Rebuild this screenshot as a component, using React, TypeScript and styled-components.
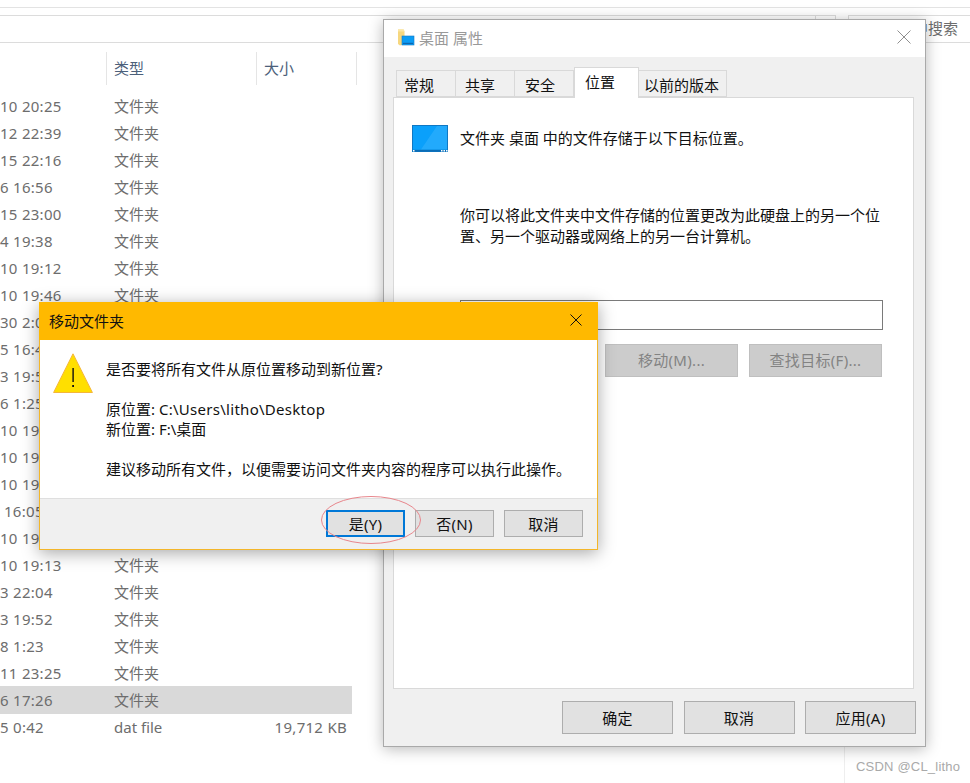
import styled, { createGlobalStyle } from 'styled-components';

const GlobalStyle = createGlobalStyle`
    html, body {
        margin: 0;
        padding: 0;
        background: #fff;
    }
    * {
        box-sizing: border-box;
    }
`;

const FONT = `'Noto Sans', 'Noto Sans CJK SC', sans-serif`;

const Page = styled.div`
    position: relative;
    width: 970px;
    height: 783px;
    overflow: hidden;
    background: #fff;
    font-family: ${FONT};
    font-size: 15px;
`;

// latin runs in the reference are a bit wider than Noto Sans
const Latin = styled.span`
    letter-spacing: 0.28px;
`;

/* ---------- explorer behind the dialogs ---------- */

const TopLine = styled.div`
    height: 8px;
    border-bottom: 1px solid #e3e3e3;
    margin-bottom: 7px;
`;

const AddressRow = styled.div`
    display: flex;
    height: 28px;
    border-bottom: 1px solid #dcdcdc;
`;

const AddressBox = styled.div`
    width: 815px;
    border-top: 1px solid #dcdcdc;
`;

const RefreshBox = styled.div`
    width: 21px;
    border: 1px solid #dcdcdc;
    border-bottom: 0;
`;

const SearchBox = styled.div`
    margin-left: 12px;
    flex: 1;
    border: 1px solid #dcdcdc;
    border-bottom: 0;
    border-right: 0;
    padding-right: 12px;
    text-align: right;
    line-height: 24px;
    color: #6d6d6d;
    white-space: nowrap;
`;

const ExplorerBody = styled.div`
    position: relative;
    height: 740px;
`;

const SideLine = styled.div`
    position: absolute;
    left: 844px;
    top: 0;
    bottom: 0;
    width: 1px;
    background: #eeeeee;
`;

const HeaderRow = styled.div`
    display: grid;
    grid-template-columns: 107px 150px 100px;
    width: 357px;
    height: 32px;
    margin: 9px 0;
`;

const HeaderCell = styled.div`
    border-right: 1px solid #e5e5e5;
    padding-left: 7px;
    line-height: 33px;
    color: #4c607a;
`;

const FileRow = styled.div<{ $selected?: boolean }>`
    display: grid;
    grid-template-columns: 114px 1fr auto;
    width: 352px;
    height: 27px;
    padding-right: 5px;
    line-height: 27px;
    color: #6d6d6d;
    white-space: nowrap;
    background: ${(p) => (p.$selected ? '#d9d9d9' : 'transparent')};
    box-shadow: ${(p) => (p.$selected ? '0 -1px 0 #d9d9d9' : 'none')};
`;

const DateCell = styled(Latin)<{ $indent?: boolean }>`
    padding-left: ${(p) => (p.$indent ? '4px' : '0')};
`;

/* ---------- shared window parts ---------- */

const WinButton = styled.div<{ $wide?: boolean; $focus?: boolean }>`
    display: flex;
    align-items: center;
    justify-content: center;
    width: ${(p) => (p.$wide ? '111px' : '79px')};
    height: ${(p) => (p.$wide ? '33px' : '27px')};
    background: #e1e1e1;
    border: ${(p) => (p.$focus ? '2px solid #0078d7' : '1px solid #adadad')};
    color: #111;
    letter-spacing: 0.3px;
`;

/* ---------- properties window ---------- */

const PropsWindow = styled.div`
    position: absolute;
    left: 383px;
    top: 19px;
    width: 543px;
    height: 728px;
    display: flex;
    flex-direction: column;
    background: #f0f0f0;
    border: 1px solid #a9a9a9;
    box-shadow: 0 2px 14px rgba(0, 0, 0, 0.28);
`;

const PropsTitle = styled.div`
    display: flex;
    align-items: center;
    height: 37px;
    padding: 0 14px 3px 13px;
    background: #fff;
    color: #999;
`;

const TitleText = styled.span`
    margin-left: 4px;
    flex: 1;
`;

const TabStrip = styled.div`
    display: flex;
    align-items: flex-end;
    height: 40px;
    padding-left: 12px;
    position: relative;
`;

const Tab = styled.div<{ $active?: boolean; $width: number; $pad: number }>`
    width: ${(p) => p.$width}px;
    height: ${(p) => (p.$active ? '31px' : '27px')};
    margin-bottom: ${(p) => (p.$active ? '-1px' : '0')};
    padding-left: ${(p) => p.$pad}px;
    border: 1px solid #d9d9d9;
    border-bottom: ${(p) => (p.$active ? '0' : '1px solid #d9d9d9')};
    border-left: ${(p) => (p.$active ? '1px solid #d9d9d9' : '0')};
    background: ${(p) => (p.$active ? '#fff' : '#f0f0f0')};
    line-height: 28px;
    color: #111;
    position: relative;
    z-index: ${(p) => (p.$active ? 1 : 0)};
    white-space: nowrap;
    &:first-child {
        border-left: 1px solid #d9d9d9;
    }
`;

const TabPanel = styled.div`
    width: 521px;
    height: 592px;
    margin-left: 9px;
    background: #fff;
    border: 1px solid #d9d9d9;
    display: flex;
    flex-direction: column;
    padding: 27px 0 0 18px;
    color: #111;
`;

const InfoRow = styled.div`
    display: flex;
    align-items: center;
    gap: 12px;
    height: 27px;
`;

const InfoText = styled.span`
    margin-top: -2px;
`;

const Paragraph = styled.div`
    width: 425px;
    margin: 53px 0 0 48px;
    line-height: 21px;
`;

const PathInput = styled.div`
    width: 423px;
    height: 30px;
    margin: 53px 0 0 48px;
    border: 1px solid #7a7a7a;
    background: #fff;
`;

const ActionRow = styled.div`
    display: flex;
    gap: 11px;
    margin: 14px 0 0 49px;
`;

const DisabledButton = styled.div`
    display: flex;
    align-items: center;
    justify-content: center;
    width: 133px;
    height: 33px;
    padding-bottom: 2px;
    background: #cccccc;
    border: 1px solid #bfbfbf;
    color: #838383;
    letter-spacing: 0.3px;
`;

const PropsFooter = styled.div`
    display: flex;
    justify-content: flex-end;
    gap: 10.5px;
    padding: 12px 9px 0 0;
`;

/* ---------- move dialog ---------- */

const MoveDialog = styled.div`
    position: absolute;
    left: 39px;
    top: 302px;
    width: 559px;
    height: 248px;
    display: flex;
    flex-direction: column;
    background: #f0f0f0;
    border: 1px solid #f3b62a;
    border-top: 0;
    box-shadow: 0 3px 16px rgba(0, 0, 0, 0.35);
`;

const MoveTitle = styled.div`
    display: flex;
    align-items: center;
    justify-content: space-between;
    height: 38px;
    margin: 0 -1px;
    padding: 0 16px 2px 10px;
    background: #ffb900;
    color: #111;
`;

const MoveBody = styled.div`
    display: flex;
    gap: 13px;
    height: 159px;
    padding: 13px 0 0 13px;
    background: #fff;
    border-bottom: 1px solid #dfdfdf;
    color: #111;
`;

const MoveText = styled.div`
    margin-top: 6px;
    line-height: 20px;
`;

const MoveLine = styled.div<{ $gap?: boolean }>`
    margin-top: ${(p) => (p.$gap ? '20px' : '0')};
`;

const MoveFooter = styled.div`
    display: flex;
    justify-content: flex-end;
    gap: 10px;
    padding: 11px 14px 0 0;
`;

const Ellipse = styled.svg`
    position: absolute;
    left: 281px;
    top: 194px;
    overflow: visible;
`;

const Watermark = styled.div`
    position: absolute;
    left: 856px;
    top: 759px;
    font-family: 'Liberation Sans', sans-serif;
    font-size: 13px;
    letter-spacing: 0.2px;
    color: #a9a9a9;
`;

const FolderIcon = () => (
    <svg width="18" height="18" viewBox="0 0 18 18">
        <path d="M1 1.5h5.5l1 1.5V16L3 17.5 1 16z" fill="#f6d77f" />
        <path d="M1 1.5h6v2H1z" fill="#fbe6a4" />
        <rect x="5" y="8" width="12" height="9" fill="#0a9cf5" stroke="#1578c4" strokeWidth="0.6" />
        <rect x="6" y="14.8" width="10" height="1.2" fill="#0c67b0" />
    </svg>
);

const DesktopIcon = () => (
    <svg width="36" height="27" viewBox="0 0 36 27">
        <rect x="0.5" y="0.5" width="35" height="26" fill="#0aa0fb" stroke="#0f78c4" />
        <path d="M9 24.5 25 1h10v23.5z" fill="#5cc3ff" opacity="0.3" />
        <rect x="1" y="24.8" width="34" height="1.7" fill="#0b6cb5" />
        <rect x="1" y="25" width="1.5" height="1.5" fill="#fff" />
        <rect x="29" y="25" width="1.5" height="1.5" fill="#fff" />
        <rect x="31.5" y="25" width="1.5" height="1.5" fill="#fff" />
        <rect x="34" y="25" width="1.5" height="1.5" fill="#fff" />
    </svg>
);

const CloseIcon = ({ color, size }: { color: string; size: number }) => (
    <svg width={size} height={size} viewBox={`0 0 ${size} ${size}`}>
        <path d={`M0.5 0.5 ${size - 0.5} ${size - 0.5}M${size - 0.5} 0.5 0.5 ${size - 0.5}`} stroke={color} fill="none" />
    </svg>
);

const WarningIcon = () => (
    <svg width="40" height="40" viewBox="0 0 40 40" style={{ flexShrink: 0 }}>
        <path d="M20 0.8 39.4 39.5H0.6z" fill="#ffdf00" stroke="#f4b63a" strokeLinejoin="round" />
        <rect x="19.4" y="15" width="1.4" height="14" fill="#111" />
        <rect x="19.2" y="32" width="1.8" height="2" fill="#111" />
    </svg>
);

const FILES: { date: string; type: string; size?: string; indent?: boolean; selected?: boolean }[] = [
    { date: '10 20:25', type: '文件夹' },
    { date: '12 22:39', type: '文件夹' },
    { date: '15 22:16', type: '文件夹' },
    { date: '6 16:56', type: '文件夹' },
    { date: '15 23:00', type: '文件夹' },
    { date: '4 19:38', type: '文件夹' },
    { date: '10 19:12', type: '文件夹' },
    { date: '10 19:46', type: '文件夹' },
    { date: '30 2:05', type: '文件夹' },
    { date: '5 16:42', type: '文件夹' },
    { date: '3 19:52', type: '文件夹' },
    { date: '6 1:25', type: '文件夹' },
    { date: '10 19:12', type: '文件夹' },
    { date: '10 19:12', type: '文件夹' },
    { date: '10 19:12', type: '文件夹' },
    { date: '16:05', type: '文件夹', indent: true },
    { date: '10 19:12', type: '文件夹' },
    { date: '10 19:13', type: '文件夹' },
    { date: '3 22:04', type: '文件夹' },
    { date: '3 19:52', type: '文件夹' },
    { date: '8 1:23', type: '文件夹' },
    { date: '11 23:25', type: '文件夹' },
    { date: '6 17:26', type: '文件夹', selected: true },
    { date: '5 0:42', type: 'dat file', size: '19,712 KB' },
];

const TABS = [
    { label: '常规', width: 60, pad: 7 },
    { label: '共享', width: 59, pad: 9 },
    { label: '安全', width: 59, pad: 10 },
    { label: '位置', width: 65, pad: 10 },
    { label: '以前的版本', width: 88, pad: 5 },
];

export default function App() {
    return (
        <Page>
            <GlobalStyle />
            <TopLine />
            <AddressRow>
                <AddressBox />
                <RefreshBox />
                <SearchBox>在 桌面 中搜索</SearchBox>
            </AddressRow>
            <ExplorerBody>
                <SideLine />
                <HeaderRow>
                    <HeaderCell />
                    <HeaderCell>类型</HeaderCell>
                    <HeaderCell>大小</HeaderCell>
                </HeaderRow>
                {FILES.map((file, i) => (
                    <FileRow key={i} $selected={file.selected}>
                        <DateCell $indent={file.indent}>{file.date}</DateCell>
                        <div>{file.type}</div>
                        <Latin>{file.size}</Latin>
                    </FileRow>
                ))}
            </ExplorerBody>

            <PropsWindow>
                <PropsTitle>
                    <FolderIcon />
                    <TitleText>桌面 属性</TitleText>
                    <CloseIcon color="#8f8f8f" size={14} />
                </PropsTitle>
                <TabStrip>
                    {TABS.map((tab) => (
                        <Tab key={tab.label} $active={tab.label === '位置'} $width={tab.width} $pad={tab.pad}>
                            {tab.label}
                        </Tab>
                    ))}
                </TabStrip>
                <TabPanel>
                    <InfoRow>
                        <DesktopIcon />
                        <InfoText>文件夹 桌面 中的文件存储于以下目标位置。</InfoText>
                    </InfoRow>
                    <Paragraph>你可以将此文件夹中文件存储的位置更改为此硬盘上的另一个位置、另一个驱动器或网络上的另一台计算机。</Paragraph>
                    <PathInput />
                    <ActionRow>
                        <DisabledButton>还原(R)</DisabledButton>
                        <DisabledButton>移动(M)...</DisabledButton>
                        <DisabledButton>查找目标(F)...</DisabledButton>
                    </ActionRow>
                </TabPanel>
                <PropsFooter>
                    <WinButton $wide>确定</WinButton>
                    <WinButton $wide>取消</WinButton>
                    <WinButton $wide>应用(A)</WinButton>
                </PropsFooter>
            </PropsWindow>

            <MoveDialog>
                <MoveTitle>
                    移动文件夹
                    <CloseIcon color="#111" size={12} />
                </MoveTitle>
                <MoveBody>
                    <WarningIcon />
                    <MoveText>
                        <MoveLine>是否要将所有文件从原位置移动到新位置?</MoveLine>
                        <MoveLine $gap>
                            原位置: <Latin>C:\Users\litho\Desktop</Latin>
                        </MoveLine>
                        <MoveLine>新位置: F:\桌面</MoveLine>
                        <MoveLine $gap>建议移动所有文件，以便需要访问文件夹内容的程序可以执行此操作。</MoveLine>
                    </MoveText>
                </MoveBody>
                <MoveFooter>
                    <WinButton $focus>是(Y)</WinButton>
                    <WinButton>否(N)</WinButton>
                    <WinButton>取消</WinButton>
                </MoveFooter>
                <Ellipse width="100" height="48" viewBox="0 0 100 48">
                    <ellipse cx="50" cy="24" rx="49.5" ry="23.5" fill="none" stroke="#e8868c" />
                </Ellipse>
            </MoveDialog>

            <Watermark>CSDN @CL_litho</Watermark>
        </Page>
    );
}
